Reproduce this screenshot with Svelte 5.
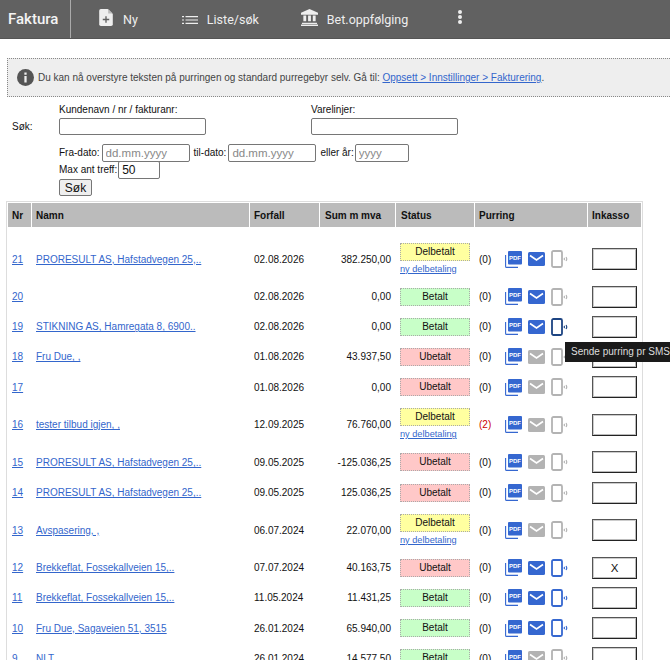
<script>
	const rows = [
		{ nr: 21, namn: 'PRORESULT AS, Hafstadvegen 25,..', dato: '02.08.2026', sum: '382.250,00', status: 'Delbetalt', purr: '(0)', mail: true, sms: false, ink: '' },
		{ nr: 20, namn: '', dato: '02.08.2026', sum: '0,00', status: 'Betalt', purr: '(0)', mail: true, sms: false, ink: '' },
		{ nr: 19, namn: 'STIKNING AS, Hamregata 8, 6900..', dato: '02.08.2026', sum: '0,00', status: 'Betalt', purr: '(0)', mail: true, sms: true, hover: true, ink: '' },
		{ nr: 18, namn: 'Fru Due, ,', dato: '01.08.2026', sum: '43.937,50', status: 'Ubetalt', purr: '(0)', mail: false, sms: false, ink: '' },
		{ nr: 17, namn: '', dato: '01.08.2026', sum: '0,00', status: 'Ubetalt', purr: '(0)', mail: false, sms: false, ink: '' },
		{ nr: 16, namn: 'tester tilbud igjen, ,', dato: '12.09.2025', sum: '76.760,00', status: 'Delbetalt', purr: '(2)', red: true, mail: false, sms: false, ink: '' },
		{ nr: 15, namn: 'PRORESULT AS, Hafstadvegen 25,..', dato: '09.05.2025', sum: '-125.036,25', status: 'Ubetalt', purr: '(0)', mail: false, sms: false, ink: '' },
		{ nr: 14, namn: 'PRORESULT AS, Hafstadvegen 25,..', dato: '09.05.2025', sum: '125.036,25', status: 'Ubetalt', purr: '(0)', mail: false, sms: false, ink: '' },
		{ nr: 13, namn: 'Avspasering, ,', dato: '06.07.2024', sum: '22.070,00', status: 'Delbetalt', purr: '(0)', mail: false, sms: false, ink: '' },
		{ nr: 12, namn: 'Brekkeflat, Fossekallveien 15,..', dato: '07.07.2024', sum: '40.163,75', status: 'Ubetalt', purr: '(0)', mail: true, sms: true, ink: 'X' },
		{ nr: 11, namn: 'Brekkeflat, Fossekallveien 15,..', dato: '11.05.2024', sum: '11.431,25', status: 'Betalt', purr: '(0)', mail: true, sms: true, ink: '' },
		{ nr: 10, namn: 'Fru Due, Sagaveien 51, 3515', dato: '26.01.2024', sum: '65.940,00', status: 'Betalt', purr: '(0)', mail: true, sms: true, ink: '' },
		{ nr: 9, namn: 'NLT', dato: '26.01.2024', sum: '14.577,50', status: 'Betalt', purr: '(0)', mail: false, sms: false, ink: '' }
	];
</script>

<div class="page">
	<nav class="topbar">
		<span class="brand">Faktura</span>
		<span class="item ny">
			<svg width="14" height="17" viewBox="0 0 16 20"><path fill="#eee" d="M2 0h8l6 6v12a2 2 0 0 1-2 2H2a2 2 0 0 1-2-2V2a2 2 0 0 1 2-2z"/><path fill="#616161" d="M7.2 8.5h1.6v3h3v1.6h-3v3H7.2v-3h-3v-1.6h3z"/><path fill="#bbb" d="M10.6 0v5.400h5.400z"/></svg>
			Ny
		</span>
		<span class="item liste">
			<svg width="16" height="8" viewBox="0 0 16 8"><path fill="#eee" d="M0 0h2v1.200H0zM3.500 0H16v1.200H3.500zM0 3.400h2v1.200H0zM3.500 3.400H16v1.200H3.500zM0 6.800h2V8H0zM3.500 6.800H16V8H3.500z"/></svg>
			Liste/søk
		</span>
		<span class="item bet">
			<svg width="17" height="17" viewBox="0 0 18 18"><path fill="#eee" d="M9 0l9 4v2H0V4zM2.500 7h3v6h-3zM7.500 7h3v6h-3zM12.500 7h3v6h-3zM1 14.500h16V16H1zM0 16.500h18V18H0z"/></svg>
			Bet.oppfølging
		</span>
		<span class="dots"><i></i><i></i><i></i></span>
	</nav>

	<div class="notice">
		<svg width="17" height="17" viewBox="0 0 18 18"><circle cx="9" cy="9" r="9" fill="#555"/><path fill="#eee" d="M7.800 3.600h2.400v2.400H7.800zM7.800 7.400h2.400v7H7.800z"/></svg>
		<span>Du kan nå overstyre teksten på purringen og standard purregebyr selv. Gå til: <a href="#/">Oppsett &gt; Innstillinger &gt; Fakturering</a>.</span>
	</div>

	<form class="search">
		<span class="sok">Søk:</span>
		<div class="fields">
			<div class="top">
				<label class="col">Kundenavn / nr / fakturanr:<input type="text" class="wide" /></label>
				<label class="col">Varelinjer:<input type="text" class="wide" /></label>
			</div>
			<div class="line">
				<span>Fra-dato:</span><input type="text" class="date" placeholder="dd.mm.yyyy" />
				<span class="next">til-dato:</span><input type="text" class="date" placeholder="dd.mm.yyyy" />
				<span class="next">eller år:</span><input type="text" class="year" placeholder="yyyy" />
			</div>
			<div class="line"><span>Max ant treff:</span><input type="text" class="max" value="50" /></div>
			<button type="button">Søk</button>
		</div>
	</form>

	<div class="tablewrap">
		<table>
			<thead>
				<tr>
					<th class="c-nr">Nr</th>
					<th class="c-namn">Namn</th>
					<th class="c-dato">Forfall</th>
					<th class="c-sum">Sum m mva</th>
					<th class="c-status">Status</th>
					<th class="c-purr">Purring</th>
					<th class="c-ink">Inkasso</th>
				</tr>
			</thead>
			<tbody>
				<tr class="spacer"><td colspan="7"></td></tr>
				{#each rows as r}
					<tr class:tall={r.status === 'Delbetalt'}>
						<td><a href="#/">{r.nr}</a></td>
						<td class="namn"><a href="#/">{r.namn}</a></td>
						<td>{r.dato}</td>
						<td class="sum">{r.sum}</td>
						<td class="status-cell">
							<div class="status {r.status.toLowerCase()}">{r.status}</div>
							{#if r.status === 'Delbetalt'}<a class="ny-del" href="#/">ny delbetaling</a>{/if}
						</td>
						<td>
							<div class="purr">
								<span class="count" class:red={r.red}>{r.purr}</span>
								<svg class="pdf" width="17" height="17" viewBox="0 0 17 17">
									<path fill="none" stroke="#3567d0" stroke-width="1.1" d="M.6 4v11.400a1 1 0 0 0 1 1h11.400"/>
									<rect x="3" y="0" width="14" height="13.500" rx="1" fill="#3567d0"/>
									<text x="10" y="9" text-anchor="middle" class="pdftext">PDF</text>
								</svg>
								<svg class="mail" width="17" height="14" viewBox="0 0 17 14">
									<rect width="17" height="14" rx="1.500" fill={r.mail ? '#3567d0' : '#b3b3b3'}/>
									<path fill="none" stroke="#fff" stroke-width="1.600" d="M2 3.500l6.500 4.500L15 3.500"/>
								</svg>
								<svg class="phone" width="17" height="18" viewBox="0 0 17 18">
									<rect x="1" y="1" width="10" height="16" rx="1.500" fill="#fff" stroke={r.hover ? '#1d4482' : r.sms ? '#3567d0' : '#b3b3b3'} stroke-width="1.800"/>
									<path fill="none" stroke={r.hover ? '#1d4482' : r.sms ? '#3567d0' : '#b3b3b3'} stroke-width="1.200" d="M13 8c.5.600.5 1.400 0 2M15 7c.900 1.200.900 2.800 0 4"/>
								</svg>
							</div>
						</td>
						<td><input type="text" class="ink" value={r.ink} /></td>
					</tr>
				{/each}
			</tbody>
		</table>
		<div class="tooltip">Sende purring pr SMS</div>
	</div>
</div>

<style>
	:global(html), :global(body) { margin: 0; overflow: hidden; background: #fff; }
	.page { height: 660px; overflow: hidden; font-family: "Liberation Sans", Arial, sans-serif; font-size: 10px; color: #111; }
	a { color: #3366cc; }

	.topbar { box-sizing: border-box; display: flex; align-items: center; height: 39px; background: #616161; color: #eee; border-bottom: 1px solid #555; font-family: Roboto, "Liberation Sans", sans-serif; font-size: 12.500px; }
	.brand { box-sizing: border-box; width: 71px; height: 38px; line-height: 38px; padding-left: 8px; font-size: 15px; font-weight: 500; color: #f4f4f4; border-right: 1px solid #aaa; }
	.item { display: flex; align-items: center; gap: 9px; padding-top: 1px; }
	.ny { margin-left: 28px; gap: 10px; }
	.ny svg { margin-bottom: 4px; }
	.liste { margin-left: 44px; }
	.bet { margin-left: 42px; }
	.bet svg { margin-bottom: 4px; }
	.dots { display: flex; flex-direction: column; gap: 1px; margin-left: 50px; margin-bottom: 4px; }
	.dots i { width: 4px; height: 4px; border-radius: 50%; background: #eee; }

	.notice { box-sizing: border-box; display: flex; align-items: center; gap: 4px; margin: 19px 0 0 7px; height: 39px; padding-left: 9px; background: #eee; border: 1px dotted #888; border-right: 0; color: #444; }

	.search { display: flex; margin: 7px 0 0 12px; }
	.sok { width: 47px; padding-top: 17px; }
	.top { display: flex; }
	.col { display: flex; flex-direction: column; width: 252px; gap: 3px; }
	input { box-sizing: border-box; font-family: inherit; font-size: 11.500px; border: 1px solid #767676; border-radius: 2px; padding: 0 3px; background: #fff; color: #111; margin: 0; }
	input::placeholder { color: #888; }
	.wide { width: 147px; height: 17px; }
	.line { display: flex; align-items: center; gap: 2px; height: 17px; }
	.top + .line { margin-top: 9px; }
	.next { margin-left: 2px; }
	.date { width: 88px; height: 18px; }
	.year { width: 54px; height: 18px; margin-left: -1px; }
	.max { width: 42px; height: 18px; margin-left: -1px; font-size: 12px; }
	button { display: block; width: 33px; height: 17px; margin-top: 1px; padding: 0; font: 12px "Liberation Sans", sans-serif; background: #efefef; border: 1px solid #767676; border-radius: 2px; color: #111; }

	.tablewrap { position: relative; margin: 5px 0 0 6px; }
	table { width: 637px; table-layout: fixed; border-collapse: separate; border-spacing: 1px; border: 1px solid #ddd; }
	th { box-sizing: border-box; background: #bbb; height: 24px; padding: 0 4px; text-align: left; font-weight: bold; color: #111; }
	td { padding: 0 4px; height: 29.200px; color: #111; white-space: nowrap; }
	.c-nr { width: 23px; }
	.c-namn { width: 217px; }
	.c-dato { width: 69px; }
	.c-sum { width: 75px; padding-left: 5px; }
	.c-status { width: 78px; padding-left: 5px; }
	.c-purr { width: 112px; }
	.c-ink { width: 53px; }
	.spacer td { height: 8px; padding: 0; }
	tr.tall td { height: 44px; }
	tr.tall .status-cell { padding-bottom: 2px; height: 42px; }
	.sum { text-align: right; }
	.status { box-sizing: border-box; width: 70px; height: 18px; line-height: 16px; text-align: center; border: 1px dotted #aaa; color: #111; }
	.delbetalt { background: #ffffa0; }
	.betalt { background: #c8ffc8; }
	.ubetalt { background: #ffc8c8; }
	.ny-del { display: block; margin-top: 3px; font-size: 9.200px; }
	.purr { display: flex; align-items: center; margin-left: 0; }
	.count { width: 26px; }
	.red { color: #c00; }
	.pdf, .mail { margin-right: 6px; }
	.pdftext { font: bold 6px "Liberation Sans", sans-serif; fill: #fff; }
	.ink { display: block; width: 45px; height: 22px; text-align: center; border: 1px solid #222; border-top-color: #555; border-left-color: #555; border-radius: 0; box-shadow: inset 1px 1px 0 #ccc, inset -1px -1px 0 #bbb; }
	.tooltip { position: absolute; left: 559px; top: 141px; width: 105px; height: 20px; line-height: 20px; box-sizing: border-box; padding-left: 6px; background: #1a1a1a; color: #ddd; white-space: nowrap; }
</style>
